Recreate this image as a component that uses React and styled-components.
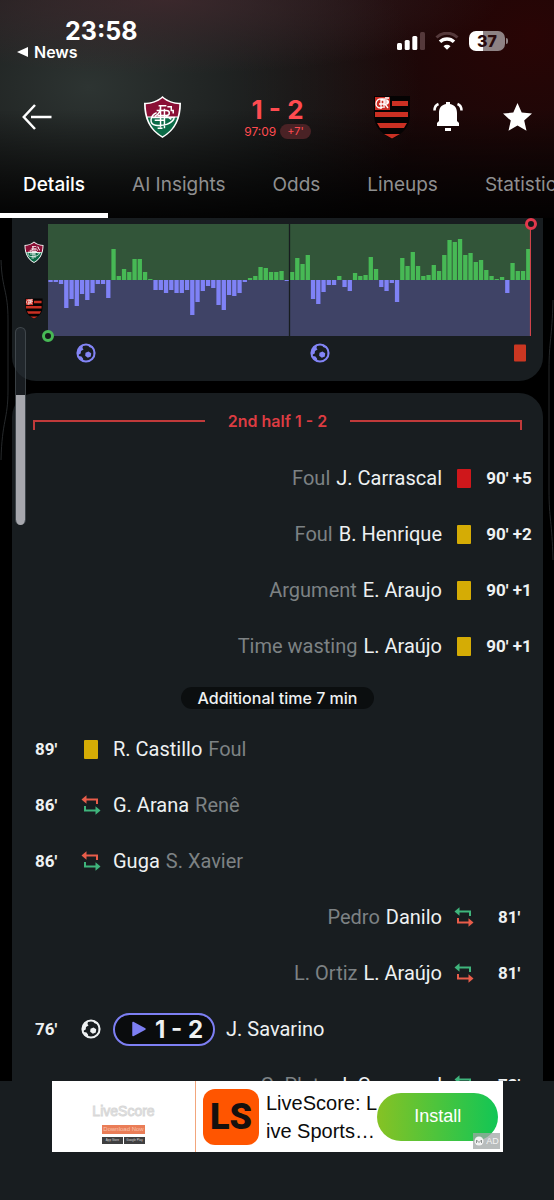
import React from 'react';
import styled, { createGlobalStyle } from 'styled-components';

const GlobalStyle = createGlobalStyle`
  * {
    box-sizing: border-box;
  }

  body {
    margin: 0;
    background-color: #000;
    font-family: Inter, 'Liberation Sans', sans-serif;
    color: #eef1f2;
  }

  button {
    margin: 0;
    padding: 0;
    border: 0;
    background: none;
    color: inherit;
    font: inherit;
    cursor: pointer;
  }
`;

const Screen = styled.div`
  position: relative;
  display: flex;
  flex-direction: column;
  height: 100vh;
  overflow: hidden;
`;

const Header = styled.header`
  flex: none;
  background:
    linear-gradient(to bottom, rgba(0, 0, 0, 0) 50%, rgba(0, 0, 0, 0.85) 100%),
    radial-gradient(ellipse 60% 34% at 30% 0%, rgba(66, 42, 47, 0.8), rgba(66, 42, 47, 0)),
    radial-gradient(ellipse 60% 100% at 16% 40%, #2d3432, rgba(30, 36, 34, 0)),
    radial-gradient(ellipse 56% 120% at 96% 16%, #290505, rgba(30, 4, 4, 0)),
    #0c0a0b;
`;

const StatusBar = styled.div`
  display: flex;
  justify-content: space-between;
  align-items: flex-start;
  height: 78px;
  padding: 17px 49px 0 17px;
  color: #fff;
`;

const Clock = styled.div`
  padding-left: 48px;
  font-size: 25px;
  line-height: 28px;
  font-weight: 700;
`;

const BackToApp = styled.button`
  display: flex;
  align-items: center;
  gap: 6px;
  font-size: 16px;
  line-height: 14px;
  font-weight: 600;
`;

const StatusIcons = styled.div`
  display: flex;
  align-items: center;
  gap: 10px;
  padding-top: 14px;
`;

const Battery = styled.div`
  position: relative;
  display: flex;
  align-items: center;
  justify-content: center;
  width: 36px;
  height: 20px;
  border-radius: 7px;
  background: linear-gradient(to right, #fff 38%, #8e8284 38%);
  color: #2a0a0c;
  font-size: 16px;
  font-weight: 800;

  &::after {
    content: '';
    position: absolute;
    right: -3px;
    width: 2px;
    height: 6px;
    border-radius: 0 2px 2px 0;
    background-color: #8e8284;
  }
`;

const MatchBar = styled.div`
  display: grid;
  grid-template-columns: 1fr 268px 1fr;
  align-items: center;
  height: 78px;
  color: #fff;
`;

const Side = styled.div`
  display: flex;
  align-items: center;
  justify-content: space-between;
  padding: 0 22px;
`;

const IconButton = styled.button`
  display: flex;
`;

const Teams = styled.div`
  display: flex;
  align-items: center;
  justify-content: space-between;
`;

const Score = styled.div`
  display: flex;
  flex-direction: column;
  align-items: center;
  color: #ff4b50;
`;

const ScoreValue = styled.div`
  font-size: 26px;
  line-height: 28px;
  font-weight: 700;
`;

const MatchTime = styled.div`
  display: flex;
  align-items: center;
  gap: 4px;
  font-size: 12px;
  line-height: 15px;
`;

const AddedTime = styled.span`
  padding: 0 7px;
  border-radius: 8px;
  background-color: #4a2225;
  font-size: 11px;
`;

const Tabs = styled.nav`
  display: flex;
  gap: 1px;
  height: 62px;
  overflow: hidden;
`;

const Tab = styled.button`
  flex: none;
  padding: 0 23px;
  border-bottom: 5px solid ${props => (props.$active ? '#fff' : 'transparent')};
  color: ${props => (props.$active ? '#fff' : '#8f8f90')};
  font-size: 19px;
  font-weight: ${props => (props.$active ? 500 : 400)};
  line-height: 57px;
`;

const Content = styled.main`
  display: flex;
  flex: 1;
  flex-direction: column;
  gap: 12px;
  min-height: 0;
  padding: 0 11px 0 12px;
  overflow: hidden;
`;

const MomentumCard = styled.section`
  display: grid;
  flex: none;
  grid-template-columns: 36px 1fr;
  padding: 6px 12px 28px 0;
  border-radius: 0 0 24px 24px;
  background-color: #181d20;
`;

const Crests = styled.div`
  display: flex;
  flex-direction: column;
  align-items: center;
  justify-content: space-around;
  padding-left: 8px;
`;

const Plot = styled.div`
  position: relative;
  height: 112px;

  svg {
    display: block;
    width: 100%;
    height: 100%;
  }
`;

const Marker = styled.span`
  position: absolute;
  width: 12px;
  height: 12px;
  margin: -6px;
  border: 3px solid ${props => (props.$end ? '#e2384c' : '#47b955')};
  border-radius: 50%;
  background-color: #14181a;
  ${props => (props.$end ? 'top: 0; right: 0;' : 'bottom: 0; left: 0;')}
`;

const Timeline = styled.div`
  position: relative;
  grid-column: 2;
  height: 17px;
`;

const TimelineMark = styled.span`
  position: absolute;
  top: 17px;
  display: flex;
  transform: translate(-50%, -50%);
`;

const EventsCard = styled.section`
  flex: none;
  padding-top: 17px;
  border-radius: 24px 24px 0 0;
  background-color: #181d20;
`;

const PeriodTitle = styled.h2`
  display: flex;
  align-items: center;
  gap: 23px;
  height: 22px;
  margin: 0 21px 18px;
  color: #dc3c42;
  font-size: 16px;
  font-weight: 600;

  &::before,
  &::after {
    content: '';
    flex: 1;
    height: 8px;
    margin-top: 8px;
    border-top: 2px solid #c03a3a;
  }

  &::before {
    border-left: 2px solid #c03a3a;
  }

  &::after {
    border-right: 2px solid #c03a3a;
  }
`;

const EventRow = styled.div`
  display: flex;
  flex-direction: ${props => (props.$away ? 'row-reverse' : 'row')};
  align-items: center;
  gap: 11px;
  height: 56px;
  font-family: Roboto, 'Liberation Sans', sans-serif;
  font-size: 20px;
`;

const Minute = styled.div`
  display: flex;
  width: 68px;
  justify-content: center;
  font-size: 17px;
  font-weight: 700;
  white-space: nowrap;
`;

const EventIcon = styled.div`
  display: flex;
  justify-content: center;
  width: 22px;
  margin: 0 0 0 -11px;

  ${props => props.$away && 'margin: 0 -11px 0 0;'}
`;

const Card = styled.span`
  width: ${props => (props.$small ? 12 : 14)}px;
  height: ${props => (props.$small ? 17 : 19)}px;
  border-radius: 1px;
  background-color: ${props => props.$color};
`;

const Names = styled.div`
  display: flex;
  flex-direction: ${props => (props.$away ? 'row-reverse' : 'row')};
  gap: 6px;
`;

const Muted = styled.span`
  color: #7d8284;
`;

const AddedBanner = styled.div`
  display: flex;
  align-items: center;
  justify-content: center;
  height: 47px;

  span {
    padding: 0 17px;
    border-radius: 12px;
    background-color: #0b0e0f;
    font-size: 16px;
    line-height: 22px;
    font-weight: 500;
  }
`;

const GoalButton = styled.button`
  display: flex;
  align-items: center;
  gap: 9px;
  height: 33px;
  padding: 0 10px 0 17px;
  border: 2px solid #7d7ff3;
  border-radius: 17px;
  background-color: #0a0c0d;
  font-family: Inter, sans-serif;
  font-size: 24px;
  font-weight: 700;
`;

const VolumeTrack = styled.div`
  position: absolute;
  top: 327px;
  left: 15px;
  display: flex;
  flex-direction: column;
  justify-content: flex-end;
  width: 11px;
  height: 198px;
  border: 1px solid rgba(120, 128, 136, 0.35);
  border-bottom: 0;
  border-radius: 6px;
  background-color: rgba(40, 46, 54, 0.6);
  overflow: hidden;
`;

const VolumeLevel = styled.div`
  height: 66%;
  margin: 0 -1px;
  background-color: #a6a7ad;
`;

const EdgeLine = styled.svg`
  position: absolute;
  top: 250px;
  left: ${props => (props.$right ? 'auto' : '0')};
  right: ${props => (props.$right ? '0' : 'auto')};
`;

const Footer = styled.footer`
  flex: none;
  padding: 0 51px 48px 52px;
  background-color: #181d20;
`;

const Ad = styled.div`
  position: relative;
  display: flex;
  align-items: center;
  height: 71px;
  padding-right: 5px;
  background-color: #fff;
  color: #0c0c0c;
  font-family: 'Liberation Sans', Arial, sans-serif;
`;

const AdPreview = styled.div`
  display: flex;
  flex-direction: column;
  align-items: center;
  gap: 3px;
  flex: none;
  width: 144px;
  height: 100%;
  padding-top: 23px;
  border-right: 1px solid #f2a67c;
`;

const AdWordmark = styled.div`
  margin-bottom: 4px;
  color: #fff;
  font-size: 14px;
  line-height: 14px;
  -webkit-text-stroke: 1px #d8d8d8;
`;

const AdDownload = styled.div`
  width: 43px;
  background-color: #ea7d57;
  color: #f9c3ae;
  font-size: 6px;
  line-height: 9px;
  text-align: center;
`;

const AdStores = styled.div`
  display: flex;
  gap: 1px;

  span {
    width: 21px;
    background-color: #3f3f40;
    color: #d8d8d8;
    font-size: 3px;
    line-height: 7px;
    text-align: center;
    white-space: nowrap;
  }
`;

const AdIcon = styled.div`
  flex: none;
  width: 56px;
  height: 56px;
  margin: 0 7px;
  border-radius: 12px;
  background-color: #ff5500;
  color: #15100e;
  font-family: Roboto, sans-serif;
  font-size: 36px;
  line-height: 56px;
  font-weight: 900;
  text-align: center;
`;

const AdText = styled.div`
  flex: 1;
  font-size: 20px;
  line-height: 28px;
  white-space: nowrap;
`;

const InstallButton = styled.button`
  flex: none;
  width: 121px;
  height: 48px;
  border-radius: 24px;
  background: linear-gradient(to right, #86c224, #12c655);
  color: #fff;
  font-size: 18px;
`;

const AdBadge = styled.span`
  position: absolute;
  right: 3px;
  bottom: 3px;
  display: flex;
  align-items: center;
  justify-content: center;
  gap: 2px;
  width: 27px;
  height: 16px;
  background-color: rgba(160, 165, 165, 0.75);
  color: #f2f2f2;
  font-size: 9px;
`;

// one value per minute, positive for the home side
const momentum = [
  -2, -2, -4, -28, -19, -26, -14, -20, -13, -4, -4, -18, 31, 4, 11, 8, 21, 21, 8, 1, -10, -10, -13,
  -10, -13, -13, -10, -35, -22, -11, -6, -8, -25, -30, -15, -16, -13, -2, 2, 4, 13, 12, 8, 8, 9, -1,
  8, 22, 16, 25, -19, -24, -12, -5, -5, 4, -7, -11, 7, 4, 5, 23, 11, -7, -11, -3, -22, 22, 14, 28,
  14, 4, 5, 15, 9, 25, 40, 38, 41, 25, 27, 18, 20, 10, 4, 1, 3, -13, 17, 9, 9, 31,
];

const chartEvents = [
  { at: 7.8, type: 'goal' },
  { at: 56.4, type: 'goal' },
  { at: 97.7, type: 'red' },
];

const stoppageEvents = [
  { minute: "90' +5", type: 'red', name: 'J. Carrascal', note: 'Foul', away: true },
  { minute: "90' +2", type: 'yellow', name: 'B. Henrique', note: 'Foul', away: true },
  { minute: "90' +1", type: 'yellow', name: 'E. Araujo', note: 'Argument', away: true },
  { minute: "90' +1", type: 'yellow', name: 'L. Araújo', note: 'Time wasting', away: true },
];

const regularEvents = [
  { minute: "89'", type: 'yellow', name: 'R. Castillo', note: 'Foul' },
  { minute: "86'", type: 'sub', name: 'G. Arana', note: 'Renê' },
  { minute: "86'", type: 'sub', name: 'Guga', note: 'S. Xavier' },
  { minute: "81'", type: 'sub', name: 'Danilo', note: 'Pedro', away: true },
  { minute: "81'", type: 'sub', name: 'L. Araújo', note: 'L. Ortiz', away: true },
  { minute: "76'", type: 'goal', name: 'J. Savarino', score: '1 - 2' },
  { minute: "73'", type: 'sub', name: 'J. Carrascal', note: 'G. Plata', away: true },
];

const FluminenseCrest = ({ width }) => (
  <svg width={width} viewBox="0 0 40 45" role="img" aria-label="Fluminense">
    <path d="M20 1C15 6 8 8 1 8c0 16 5 28 19 36 14-8 19-20 19-36-7 0-14-2-19-7z" fill="#fff" />
    <path d="M20 3.200C15 7.500 9 9.300 2.800 9.600c.1 4.500.6 8.600 1.700 12.400h31c1.100-3.800 1.600-7.900 1.700-12.400C31 9.300 25 7.500 20 3.200z" fill="#8a0f35" />
    <path d="M4.800 23C7.300 31.500 12 37.500 20 42.200 28 37.500 32.700 31.500 35.200 23z" fill="#0b6b47" />
    <path
      d="M16 11h8M18 11v22M22 14v20M14 16h10c4 0 4 5 0 5h-9M23 21l6 4M14 18c-7 3-8 12-1 13 8 1 16-1 19-7M12 26h10M15 34h5M12 22c4-2 6-6 6-10M25 12h4v4h2v3M9 23h24"
      fill="none"
      stroke="#fff"
      strokeWidth="1.500"
    />
  </svg>
);

const FlamengoCrest = ({ width }) => (
  <svg width={width} viewBox="0 0 38 45" role="img" aria-label="Flamengo">
    <path d="M1 1h36v18c0 12-6 19-18 25C7 38 1 31 1 19z" fill="#050303" />
    <path d="M19 6h16v5H19zM2 17h33v5H2zM4 28h30l-3 5H7zM11 39h16l-8 4.500z" fill="#cb3023" />
    <path d="M2 2h15v13H2z" fill="#cb2c23" />
    <path
      d="M10 4c-5-1-7 2-7 5s3 5 7 3M8 4v10M8 5h5c3 0 3 4 0 4H6M12 9l3 4M11 3v10M11 7h5M12 3h4"
      fill="none"
      stroke="#fff"
      strokeWidth="1.300"
    />
  </svg>
);

const BallIcon = ({ color }) => (
  <svg width="20" height="20" viewBox="0 0 20 20" role="img" aria-label="Goal">
    <circle cx="10" cy="10" r="8.600" fill="none" stroke={color} strokeWidth="2" />
    <path d="M9.500 9.800l3-1.300 2.700 1.700-.4 3.200-3 1.300-2.600-1.900z" fill={color} />
    <path d="M7 2l-.5 3L7.500 6.500 5 8l-.3 2.500L2 12V6zM12 1.500l1 2.500 3 1 1.500-.5L14 2zM3 13l2.500.5 1.500 2 .5 3-3.500-1.500zM18.500 8l-1 2 1 3z" fill={color} />
  </svg>
);

const SubIcon = ({ top, bottom }) => (
  <svg width="20" height="20" viewBox="0 0 20 20" role="img" aria-label="Substitution">
    <path d="M4 4.500h12V9" fill="none" stroke={top} strokeWidth="2" />
    <path d="M.5 4.500L5.500.3v8.400z" fill={top} />
    <path d="M4 11v4.500h12" fill="none" stroke={bottom} strokeWidth="2" />
    <path d="M19.500 15.500l-5-4.200v8.400z" fill={bottom} />
  </svg>
);

const MomentumChart = () => {
  const step = 483 / momentum.length;

  return (
    <svg viewBox="0 0 483 112" preserveAspectRatio="none" role="img" aria-label="Match momentum">
      <rect width="483" height="56" fill="#325539" />
      <rect y="56" width="483" height="56" fill="#3f4366" />
      {momentum.map((value, i) => (
        <rect
          key={i}
          x={i * step + 0.4}
          y={value > 0 ? 56 - value : 56}
          width="4.300"
          height={Math.abs(value)}
          fill={value > 0 ? '#47b955' : '#7f82f6'}
        />
      ))}
      <path d="M241.500 0v112" stroke="#171c1f" strokeWidth="1.300" />
      <path d="M482.500 0v112" stroke="#d0434a" strokeWidth="1.200" />
    </svg>
  );
};

const renderIcon = ({ type, away }) => {
  if (type === 'red') return <Card $color="#cf171b" />;
  if (type === 'yellow') return <Card $color="#d5ac05" />;
  if (type === 'goal') return <BallIcon color="#eef1f2" />;
  return away ? <SubIcon top="#3fb57c" bottom="#e85d4a" /> : <SubIcon top="#e85d4a" bottom="#3fb57c" />;
};

const Event = ({ event }) => (
  <EventRow $away={event.away}>
    <Minute>{event.minute}</Minute>
    <EventIcon $away={event.away}>{renderIcon(event)}</EventIcon>
    {event.score && (
      <GoalButton>
        <svg width="14" height="16" viewBox="0 0 14 16" aria-hidden="true">
          <path d="M1 1.500v13L13 8z" fill="#7d7ff3" stroke="#7d7ff3" strokeWidth="1.500" strokeLinejoin="round" />
        </svg>
        {event.score}
      </GoalButton>
    )}
    <Names $away={event.away}>
      <span>{event.name}</span>
      {event.note && <Muted>{event.note}</Muted>}
    </Names>
  </EventRow>
);

const App = () => (
  <Screen>
    <GlobalStyle />
    <Header>
      <StatusBar>
        <div>
          <Clock>23:58</Clock>
          <BackToApp>
            <svg width="11" height="10" viewBox="0 0 11 10" aria-hidden="true">
              <path d="M0 5l11-5v10z" fill="#fff" />
            </svg>
            News
          </BackToApp>
        </div>
        <StatusIcons>
          <svg width="28" height="18" viewBox="0 0 28 18" aria-hidden="true">
            <rect x="0" y="11" width="5" height="7" rx="1.500" fill="#fff" />
            <rect x="7.700" y="8" width="5" height="10" rx="1.500" fill="#fff" />
            <rect x="15.300" y="4" width="5" height="14" rx="1.500" fill="#fff" />
            <rect x="23" y="0" width="5" height="18" rx="1.500" fill="#55393b" />
          </svg>
          <svg width="24" height="18" viewBox="0 0 24 18" fill="none" strokeWidth="3" aria-hidden="true">
            <path d="M1.500 5.500a15 15 0 0 1 21 0" stroke="#55393b" />
            <path d="M5 9.800a10 10 0 0 1 14 0" stroke="#fff" strokeWidth="3.500" />
            <path d="M12 17.800l-3.500-3.600a5 5 0 0 1 7 0z" fill="#fff" />
          </svg>
          <Battery>37</Battery>
        </StatusIcons>
      </StatusBar>
      <MatchBar>
        <Side>
          <IconButton aria-label="Back">
            <svg width="30" height="26" viewBox="0 0 30 26" fill="none" stroke="#fff" strokeWidth="2.500" aria-hidden="true">
              <path d="M13 1L1.800 13 13 25M9 13h20.500" />
            </svg>
          </IconButton>
        </Side>
        <Teams>
          <FluminenseCrest width={39} />
          <Score>
            <ScoreValue>1 - 2</ScoreValue>
            <MatchTime>
              97:09 <AddedTime>+7'</AddedTime>
            </MatchTime>
          </Score>
          <FlamengoCrest width={38} />
        </Teams>
        <Side>
          <IconButton aria-label="Notifications">
            <svg width="30" height="30" viewBox="0 0 30 30" aria-hidden="true">
              <path d="M13 2V0h4v2c5 1 7 4 7 9v8l2 2v3H4v-3l2-2v-8c0-5 2-8 7-9zM12 26h6v3h-6z" fill="#fff" />
              <path d="M5.500 2C3 3 1.500 5 1.500 8.500M24.500 2c2.500 1 4 3 4 6.500" fill="none" stroke="#fff" strokeWidth="2.500" />
            </svg>
          </IconButton>
          <IconButton aria-label="Favourite">
            <svg width="29" height="28" viewBox="0 0 29 28" aria-hidden="true">
              <path d="M14.500 0l4.200 9.600L29 10.600l-7.800 7 2.300 10.200-9-5.300-9 5.300 2.300-10.200-7.800-7 10.300-1z" fill="#fff" />
            </svg>
          </IconButton>
        </Side>
      </MatchBar>
      <Tabs>
        <Tab $active>Details</Tab>
        <Tab>AI Insights</Tab>
        <Tab>Odds</Tab>
        <Tab>Lineups</Tab>
        <Tab>Statistics</Tab>
      </Tabs>
    </Header>

    <Content>
      <MomentumCard>
        <Crests>
          <FluminenseCrest width={20} />
          <FlamengoCrest width={18} />
        </Crests>
        <Plot>
          <MomentumChart />
          <Marker />
          <Marker $end />
        </Plot>
        <Timeline>
          {chartEvents.map(({ at, type }) => (
            <TimelineMark key={at} style={{ left: `${at}%` }}>
              {type === 'goal' ? <BallIcon color="#8385f6" /> : <Card $small $color="#cb3722" />}
            </TimelineMark>
          ))}
        </Timeline>
      </MomentumCard>

      <EventsCard>
        <PeriodTitle>2nd half 1 - 2</PeriodTitle>
        {stoppageEvents.map(event => (
          <Event key={event.minute + event.name} event={event} />
        ))}
        <AddedBanner>
          <span>Additional time 7 min</span>
        </AddedBanner>
        {regularEvents.map(event => (
          <Event key={event.minute + event.name} event={event} />
        ))}
      </EventsCard>
    </Content>

    <Footer>
      <Ad>
        <AdPreview>
          <AdWordmark>LiveScore</AdWordmark>
          <AdDownload>Download Now</AdDownload>
          <AdStores>
            <span>App Store</span>
            <span>Google Play</span>
          </AdStores>
        </AdPreview>
        <AdIcon>LS</AdIcon>
        <AdText>
          LiveScore: L
          <br />
          ive Sports…
        </AdText>
        <InstallButton>Install</InstallButton>
        <AdBadge>
          <svg width="10" height="10" viewBox="0 0 10 10" aria-hidden="true">
            <circle cx="5" cy="5" r="4.500" fill="#f2f2f2" />
            <path d="M2.500 7V4l2.500 2.500L7.500 4v3" fill="none" stroke="#8d9190" />
          </svg>
          AD
        </AdBadge>
      </Ad>
    </Footer>

    <EdgeLine width="10" height="220" viewBox="0 0 10 220" fill="none" stroke="#26292b">
      <path d="M1 10C2 40 8 40 8 70v70c0 30-6 30-7 70" />
    </EdgeLine>
    <EdgeLine $right width="6" height="320" viewBox="0 0 6 320" fill="none" stroke="#26292b">
      <path d="M5 50C4 90 1 90 1 120v120c0 30 3 30 4 70" />
    </EdgeLine>
    <VolumeTrack>
      <VolumeLevel />
    </VolumeTrack>
  </Screen>
);

export default App;
